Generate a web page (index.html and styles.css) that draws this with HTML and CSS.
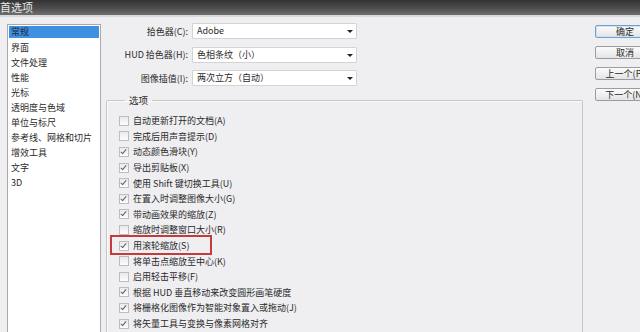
FILE: index.html
```html
<!DOCTYPE html>
<html lang="zh-cn">
  <head>
    <meta charset="utf-8" />
    <title>首选项</title>
    <link rel="stylesheet" href="styles.css">
  </head>
  <body>
    <div class="titlebar"><span class="title">首选项</span></div>
    <div class="dialog">
      <ul class="nav">
        <li class="active">常规</li>
        <li>界面</li>
        <li>文件处理</li>
        <li>性能</li>
        <li>光标</li>
        <li>透明度与色域</li>
        <li>单位与标尺</li>
        <li>参考线、网格和切片</li>
        <li>增效工具</li>
        <li>文字</li>
        <li>3D</li>
      </ul>

      <div class="main">
        <div class="fields">
          <label>拾色器(C):</label>
          <div class="select">Adobe<span class="arrow"></span></div>
          <label>HUD 拾色器(H):</label>
          <div class="select">色相条纹（小）<span class="arrow"></span></div>
          <label>图像插值(I):</label>
          <div class="select">两次立方（自动）<span class="arrow"></span></div>
        </div>

        <fieldset class="group">
          <legend>选项</legend>
          <div class="row"><span class="box"></span>自动更新打开的文档(A)</div>
          <div class="row"><span class="box"></span>完成后用声音提示(D)</div>
          <div class="row"><span class="box on"></span>动态颜色滑块(Y)</div>
          <div class="row"><span class="box on"></span>导出剪贴板(X)</div>
          <div class="row"><span class="box on"></span>使用 Shift 键切换工具(U)</div>
          <div class="row"><span class="box on"></span>在置入时调整图像大小(G)</div>
          <div class="row"><span class="box on"></span>带动画效果的缩放(Z)</div>
          <div class="row"><span class="box"></span>缩放时调整窗口大小(R)</div>
          <div class="row"><span class="box on"></span>用滚轮缩放(S)<span class="mark"></span></div>
          <div class="row"><span class="box"></span>将单击点缩放至中心(K)</div>
          <div class="row"><span class="box"></span>启用轻击平移(F)</div>
          <div class="row"><span class="box on"></span>根据 HUD 垂直移动来改变圆形画笔硬度</div>
          <div class="row"><span class="box on"></span>将栅格化图像作为智能对象置入或拖动(J)</div>
          <div class="row"><span class="box on"></span>将矢量工具与变换与像素网格对齐</div>
        </fieldset>
      </div>

      <div class="buttons">
        <button class="btn default">确定</button>
        <button class="btn">取消</button>
        <button class="btn">上一个(P)</button>
        <button class="btn">下一个(N)</button>
      </div>
    </div>
  </body>
</html>
```

FILE: styles.css
```css
html,
body {
  margin: 0;
  padding: 0;
  width: 640px;
  height: 332px;
  overflow: hidden;
  background-color: #efeef1;
  font-family: "Noto Sans CJK SC", "Liberation Sans", sans-serif;
  font-size: 9px;
  color: #2a2a2a;
}

.titlebar {
  height: 15px;
  background: linear-gradient(#333, #4e4e4e 55%, #6e6e6e);
  border-bottom: 2px solid #d9d9db;
  overflow: hidden;
}
.title {
  display: block;
  margin-left: 0;
  line-height: 15px;
  font-size: 11px;
  color: #e8e8e8;
}

.dialog {
  display: flex;
  align-items: flex-start;
  height: 315px;
  overflow: hidden;
}

/* left category list */
.nav {
  flex: none;
  list-style: none;
  margin: 7px 0 0 7px;
  padding: 1px 1px 0 1px;
  width: 90px;
  height: 310px;
  background-color: #fff;
  border: 1px solid #a9a9ab;
  border-bottom: none;
}
.nav li {
  height: 15px;
  line-height: 14px;
  padding-left: 2px;
  white-space: nowrap;
}
.nav li.active {
  height: 12px;
  line-height: 12px;
  margin-bottom: 3px;
  background-color: #3f8fe2;
  color: #1d2a3a;
}

.main {
  flex: none;
  margin-left: 5px;
  width: 477px;
}

/* top selects */
.fields {
  display: grid;
  grid-template-columns: 82px 165px;
  column-gap: 4px;
  row-gap: 7.5px;
  align-items: center;
  margin-top: 6px;
}
.fields label {
  text-align: right;
  white-space: nowrap;
}
.select {
  position: relative;
  height: 14px;
  line-height: 14px;
  padding-left: 4px;
  background-color: #fff;
  border: 1px solid #d4d4d6;
  border-radius: 1px;
}
.arrow {
  position: absolute;
  right: 3px;
  top: 6px;
  border-left: 3px solid transparent;
  border-right: 3px solid transparent;
  border-top: 3px solid #222;
}

/* options group */
.group {
  margin: 9px 0 0 0;
  padding: 8px 0 0 12px;
  height: 240px;
  border: 1px solid #c6c6c8;
  border-bottom: none;
  box-shadow: inset 1px 1px 0 #fbfbfc;
  border-radius: 2px 2px 0 0;
}
.group legend {
  margin-left: 6px;
  padding: 0 4px;
  font-size: 9.5px;
  line-height: 10px;
}
.row {
  position: relative;
  display: flex;
  align-items: center;
  height: 15.6px;
  white-space: nowrap;
}
.box {
  position: relative;
  flex: none;
  width: 8px;
  height: 8px;
  margin-right: 4px;
  border: 1px solid #bdbdc0;
  background: linear-gradient(#e9e9eb, #fdfdfd);
}
.box.on::after {
  content: "";
  position: absolute;
  left: 2px;
  top: 0;
  width: 2px;
  height: 5px;
  border-right: 1.3px solid #606066;
  border-bottom: 1.3px solid #606066;
  transform: rotate(40deg);
}
.mark {
  position: absolute;
  left: -9px;
  top: -3px;
  width: 98px;
  height: 16px;
  border: 2px solid #c8393b;
}

/* right buttons */
.buttons {
  flex: none;
  display: flex;
  flex-direction: column;
  gap: 8px;
  margin: 8px 0 0 12px;
}
.btn {
  width: 60px;
  height: 13px;
  padding: 0;
  font: inherit;
  font-size: 9px;
  line-height: 11px;
  color: #2a2a2a;
  background: linear-gradient(#fbfbfb, #e4e4e6);
  border: 1px solid #9c9ca0;
  border-radius: 2px;
}
.btn.default {
  border-color: #6f9fcc;
  box-shadow: inset 0 0 0 1px #cfe3f5;
}
```
